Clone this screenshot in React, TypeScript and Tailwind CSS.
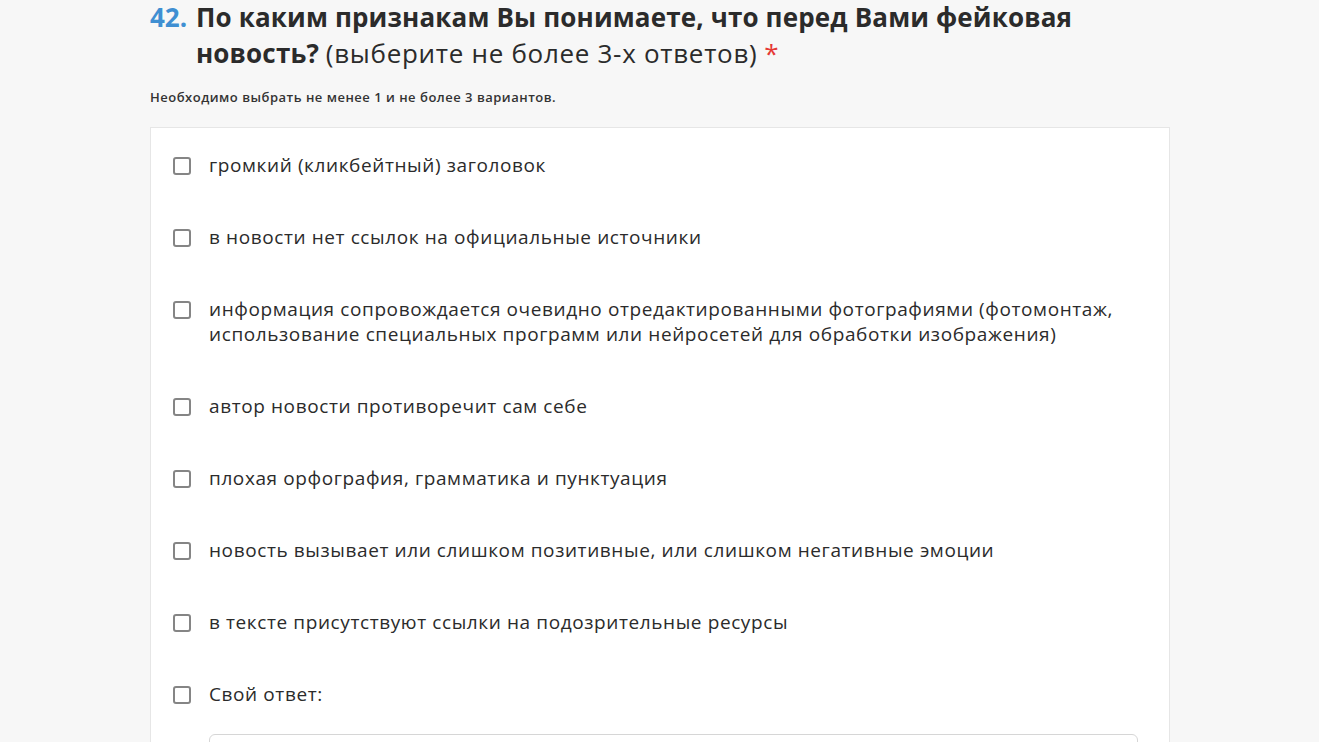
import React from "react";

const options = [
  "громкий (кликбейтный) заголовок",
  "в новости нет ссылок на официальные источники",
  "информация сопровождается очевидно отредактированными фотографиями (фотомонтаж, использование специальных программ или нейросетей для обработки изображения)",
  "автор новости противоречит сам себе",
  "плохая орфография, грамматика и пунктуация",
  "новость вызывает или слишком позитивные, или слишком негативные эмоции",
  "в тексте присутствуют ссылки на подозрительные ресурсы",
  "Свой ответ:",
];

function Box() {
  return (
    <span className="mt-[3.5px] h-[18px] w-[18px] shrink-0 rounded-[3px] border-2 border-[#858585] bg-white" />
  );
}

export default function App() {
  return (
    <div
      className="h-[742px] w-full overflow-hidden bg-[#f7f7f7] text-[#2b2b2b]"
      style={{ fontFamily: '"Open Sans", "Noto Sans", sans-serif' }}
    >
      <div className="ml-[150px] w-[1020px]">
        <div className="-mt-[1px] flex text-[26px] leading-[36px]">
          <span className="w-[46px] shrink-0 font-bold text-[#3f8fd2]">42.</span>
          <h1>
            <span className="font-bold tracking-[0.15px]">
              По каким признакам Вы понимаете, что перед Вами фейковая новость?
            </span>{" "}
            <span className="font-normal tracking-[0.7px]">(выберите не более 3-х ответов)</span>{" "}
            <span className="text-[#e53935]">*</span>
          </h1>
        </div>
        <p className="mt-[16px] text-[13px] font-semibold leading-[20px] tracking-[0.5px] text-[#333]">
          Необходимо выбрать не менее 1 и не более 3 вариантов.
        </p>
        <div className="mt-[20px] border border-[#e6e6e6] bg-white px-[22px] pt-[25px] pb-[40px]">
          <div className="flex flex-col gap-[47px]">
            {options.map((o) => (
              <div key={o} className="flex gap-[18px] text-[19px] leading-[25px] tracking-[0.6px]">
                <Box />
                <span className="max-w-[930px]">{o}</span>
              </div>
            ))}
          </div>
          <div className="ml-[36px] mt-[27px] h-[44px] w-[929px] rounded-[6px] border border-[#d6d6d6] bg-white" />
        </div>
      </div>
    </div>
  );
}
